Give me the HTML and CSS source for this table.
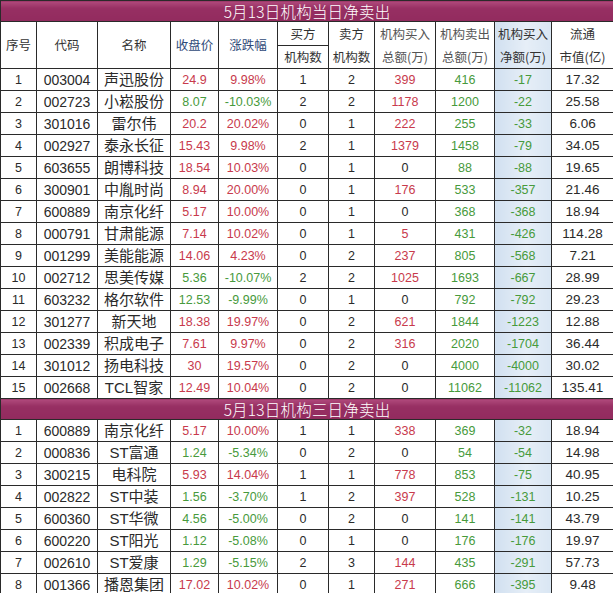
FILE: index.html
```html
<!DOCTYPE html>
<html lang="zh-CN">
<head>
<meta charset="utf-8">
<title>机构净卖出</title>
<link rel="stylesheet" href="styles.css">
</head>
<body>
<table class="sheet">
  <colgroup>
    <col class="c1"><col class="c2"><col class="c3"><col class="c4"><col class="c5"><col class="c6">
    <col class="c7"><col class="c8"><col class="c9"><col class="c10"><col class="c11">
  </colgroup>
  <tbody>
    <tr class="title"><td colspan="11">5月13日机构当日净卖出</td></tr>
    <tr class="head h1">
      <td rowspan="2">序号</td>
      <td rowspan="2">代码</td>
      <td rowspan="2">名称</td>
      <td rowspan="2" class="blue">收盘价</td>
      <td rowspan="2" class="blue">涨跌幅</td>
      <td class="split">买方</td>
      <td>卖方</td>
      <td class="gray">机构买入</td>
      <td class="gray">机构卖出</td>
      <td class="net">机构买入</td>
      <td>流通</td>
    </tr>
    <tr class="head h2">
      <td>机构数</td>
      <td>机构数</td>
      <td class="gray">总额(万)</td>
      <td class="gray">总额(万)</td>
      <td class="net">净额(万)</td>
      <td>市值(亿)</td>
    </tr>
    <tr><td>1</td><td class="code">003004</td><td class="name">声迅股份</td><td class="r">24.9</td><td class="r">9.98%</td><td>1</td><td>2</td><td class="r">399</td><td class="g">416</td><td class="net g">-17</td><td class="cap">17.32</td></tr>
    <tr><td>2</td><td class="code">002723</td><td class="name">小崧股份</td><td class="g">8.07</td><td class="g">-10.03%</td><td>2</td><td>2</td><td class="r">1178</td><td class="g">1200</td><td class="net g">-22</td><td class="cap">25.58</td></tr>
    <tr><td>3</td><td class="code">301016</td><td class="name">雷尔伟</td><td class="r">20.2</td><td class="r">20.02%</td><td>0</td><td>1</td><td class="r">222</td><td class="g">255</td><td class="net g">-33</td><td class="cap">6.06</td></tr>
    <tr><td>4</td><td class="code">002927</td><td class="name">泰永长征</td><td class="r">15.43</td><td class="r">9.98%</td><td>2</td><td>1</td><td class="r">1379</td><td class="g">1458</td><td class="net g">-79</td><td class="cap">34.05</td></tr>
    <tr><td>5</td><td class="code">603655</td><td class="name">朗博科技</td><td class="r">18.54</td><td class="r">10.03%</td><td>0</td><td>1</td><td>0</td><td class="g">88</td><td class="net g">-88</td><td class="cap">19.65</td></tr>
    <tr><td>6</td><td class="code">300901</td><td class="name">中胤时尚</td><td class="r">8.94</td><td class="r">20.00%</td><td>0</td><td>1</td><td class="r">176</td><td class="g">533</td><td class="net g">-357</td><td class="cap">21.46</td></tr>
    <tr><td>7</td><td class="code">600889</td><td class="name">南京化纤</td><td class="r">5.17</td><td class="r">10.00%</td><td>0</td><td>1</td><td>0</td><td class="g">368</td><td class="net g">-368</td><td class="cap">18.94</td></tr>
    <tr><td>8</td><td class="code">000791</td><td class="name">甘肃能源</td><td class="r">7.14</td><td class="r">10.02%</td><td>0</td><td>1</td><td class="r">5</td><td class="g">431</td><td class="net g">-426</td><td class="cap">114.28</td></tr>
    <tr><td>9</td><td class="code">001299</td><td class="name">美能能源</td><td class="r">14.06</td><td class="r">4.23%</td><td>0</td><td>2</td><td class="r">237</td><td class="g">805</td><td class="net g">-568</td><td class="cap">7.21</td></tr>
    <tr><td>10</td><td class="code">002712</td><td class="name">思美传媒</td><td class="g">5.36</td><td class="g">-10.07%</td><td>2</td><td>2</td><td class="r">1025</td><td class="g">1693</td><td class="net g">-667</td><td class="cap">28.99</td></tr>
    <tr><td>11</td><td class="code">603232</td><td class="name">格尔软件</td><td class="g">12.53</td><td class="g">-9.99%</td><td>0</td><td>1</td><td>0</td><td class="g">792</td><td class="net g">-792</td><td class="cap">29.23</td></tr>
    <tr><td>12</td><td class="code">301277</td><td class="name">新天地</td><td class="r">18.38</td><td class="r">19.97%</td><td>0</td><td>2</td><td class="r">621</td><td class="g">1844</td><td class="net g">-1223</td><td class="cap">12.88</td></tr>
    <tr><td>13</td><td class="code">002339</td><td class="name">积成电子</td><td class="r">7.61</td><td class="r">9.97%</td><td>0</td><td>2</td><td class="r">316</td><td class="g">2020</td><td class="net g">-1704</td><td class="cap">36.44</td></tr>
    <tr><td>14</td><td class="code">301012</td><td class="name">扬电科技</td><td class="r">30</td><td class="r">19.57%</td><td>0</td><td>2</td><td>0</td><td class="g">4000</td><td class="net g">-4000</td><td class="cap">30.02</td></tr>
    <tr><td>15</td><td class="code">002668</td><td class="name">TCL智家</td><td class="r">12.49</td><td class="r">10.04%</td><td>0</td><td>2</td><td>0</td><td class="g">11062</td><td class="net g">-11062</td><td class="cap">135.41</td></tr>
    <tr class="title"><td colspan="11">5月13日机构三日净卖出</td></tr>
    <tr><td>1</td><td class="code">600889</td><td class="name">南京化纤</td><td class="r">5.17</td><td class="r">10.00%</td><td>1</td><td>1</td><td class="r">338</td><td class="g">369</td><td class="net g">-32</td><td class="cap">18.94</td></tr>
    <tr><td>2</td><td class="code">000836</td><td class="name">ST富通</td><td class="g">1.24</td><td class="g">-5.34%</td><td>0</td><td>2</td><td>0</td><td class="g">54</td><td class="net g">-54</td><td class="cap">14.98</td></tr>
    <tr><td>3</td><td class="code">300215</td><td class="name">电科院</td><td class="r">5.93</td><td class="r">14.04%</td><td>1</td><td>1</td><td class="r">778</td><td class="g">853</td><td class="net g">-75</td><td class="cap">40.95</td></tr>
    <tr><td>4</td><td class="code">002822</td><td class="name">ST中装</td><td class="g">1.56</td><td class="g">-3.70%</td><td>1</td><td>2</td><td class="r">397</td><td class="g">528</td><td class="net g">-131</td><td class="cap">10.25</td></tr>
    <tr><td>5</td><td class="code">600360</td><td class="name">ST华微</td><td class="g">4.56</td><td class="g">-5.00%</td><td>0</td><td>2</td><td>0</td><td class="g">141</td><td class="net g">-141</td><td class="cap">43.79</td></tr>
    <tr><td>6</td><td class="code">600220</td><td class="name">ST阳光</td><td class="g">1.12</td><td class="g">-5.08%</td><td>0</td><td>1</td><td>0</td><td class="g">176</td><td class="net g">-176</td><td class="cap">19.97</td></tr>
    <tr><td>7</td><td class="code">002610</td><td class="name">ST爱康</td><td class="g">1.29</td><td class="g">-5.15%</td><td>2</td><td>3</td><td class="r">144</td><td class="g">435</td><td class="net g">-291</td><td class="cap">57.73</td></tr>
    <tr><td>8</td><td class="code">001366</td><td class="name">播恩集团</td><td class="r">17.02</td><td class="r">10.02%</td><td>0</td><td>1</td><td class="r">271</td><td class="g">666</td><td class="net g">-395</td><td class="cap">9.48</td></tr>
  </tbody>
</table>
</body>
</html>
```
FILE: styles.css
```css
html, body {
  margin: 0;
  padding: 0;
  background: #ffffff;
}

.sheet {
  width: 613px;
  border-collapse: collapse;
  table-layout: fixed;
  font-family: "Liberation Sans", "Noto Sans CJK SC", sans-serif;
  font-size: 12.5px;
  color: #2a2a2a;
}

.c1 { width: 36px; }
.c2 { width: 61px; }
.c3 { width: 73px; }
.c4 { width: 48px; }
.c5 { width: 59px; }
.c6 { width: 51px; }
.c7 { width: 46px; }
.c8 { width: 61px; }
.c9 { width: 59px; }
.c10 { width: 57px; }
.c11 { width: 62px; }

.sheet td {
  border: 1px solid #2a2a2a;
  padding: 0;
  text-align: center;
  vertical-align: middle;
  white-space: nowrap;
  overflow: hidden;
  height: 21px;
  line-height: 20px;
}

.title td {
  height: 20px;
  line-height: 20px;
  background: linear-gradient(#b04a7c 0%, #972f63 35%, #922b5e 100%);
  color: #ffffff;
  font-family: "Noto Sans CJK SC", "Liberation Sans", sans-serif;
  font-size: 15.5px;
  font-weight: 300;
  letter-spacing: 0.2px;
}

.head td {
  font-family: "Noto Sans CJK SC", "Liberation Sans", sans-serif;
  font-size: 12.5px;
  color: #333;
  line-height: 20px;
}

.h1 td { height: 23px; border-bottom: none; }
.h2 td { height: 22px; border-top: none; }
.h1 td[rowspan] { border-bottom: 1px solid #2a2a2a; }
.h1 td.split { border-bottom: 1px solid #2a2a2a; }
.h2 td:first-child { border-top: 1px solid #2a2a2a; }

.head td.blue { color: #2f4a78; }
.head td.gray { color: #555; }

.code {
  font-size: 14px;
}

.name {
  font-family: "Liberation Sans", "Noto Sans CJK SC", sans-serif;
  font-size: 15px;
}

.cap {
  font-size: 13.5px;
}

.r { color: #c83a4c; }
.g { color: #479a3c; }

.net {
  background: linear-gradient(to right, #d1e0f0 0%, #e6eef7 55%, #d9e6f3 100%);
}
```
